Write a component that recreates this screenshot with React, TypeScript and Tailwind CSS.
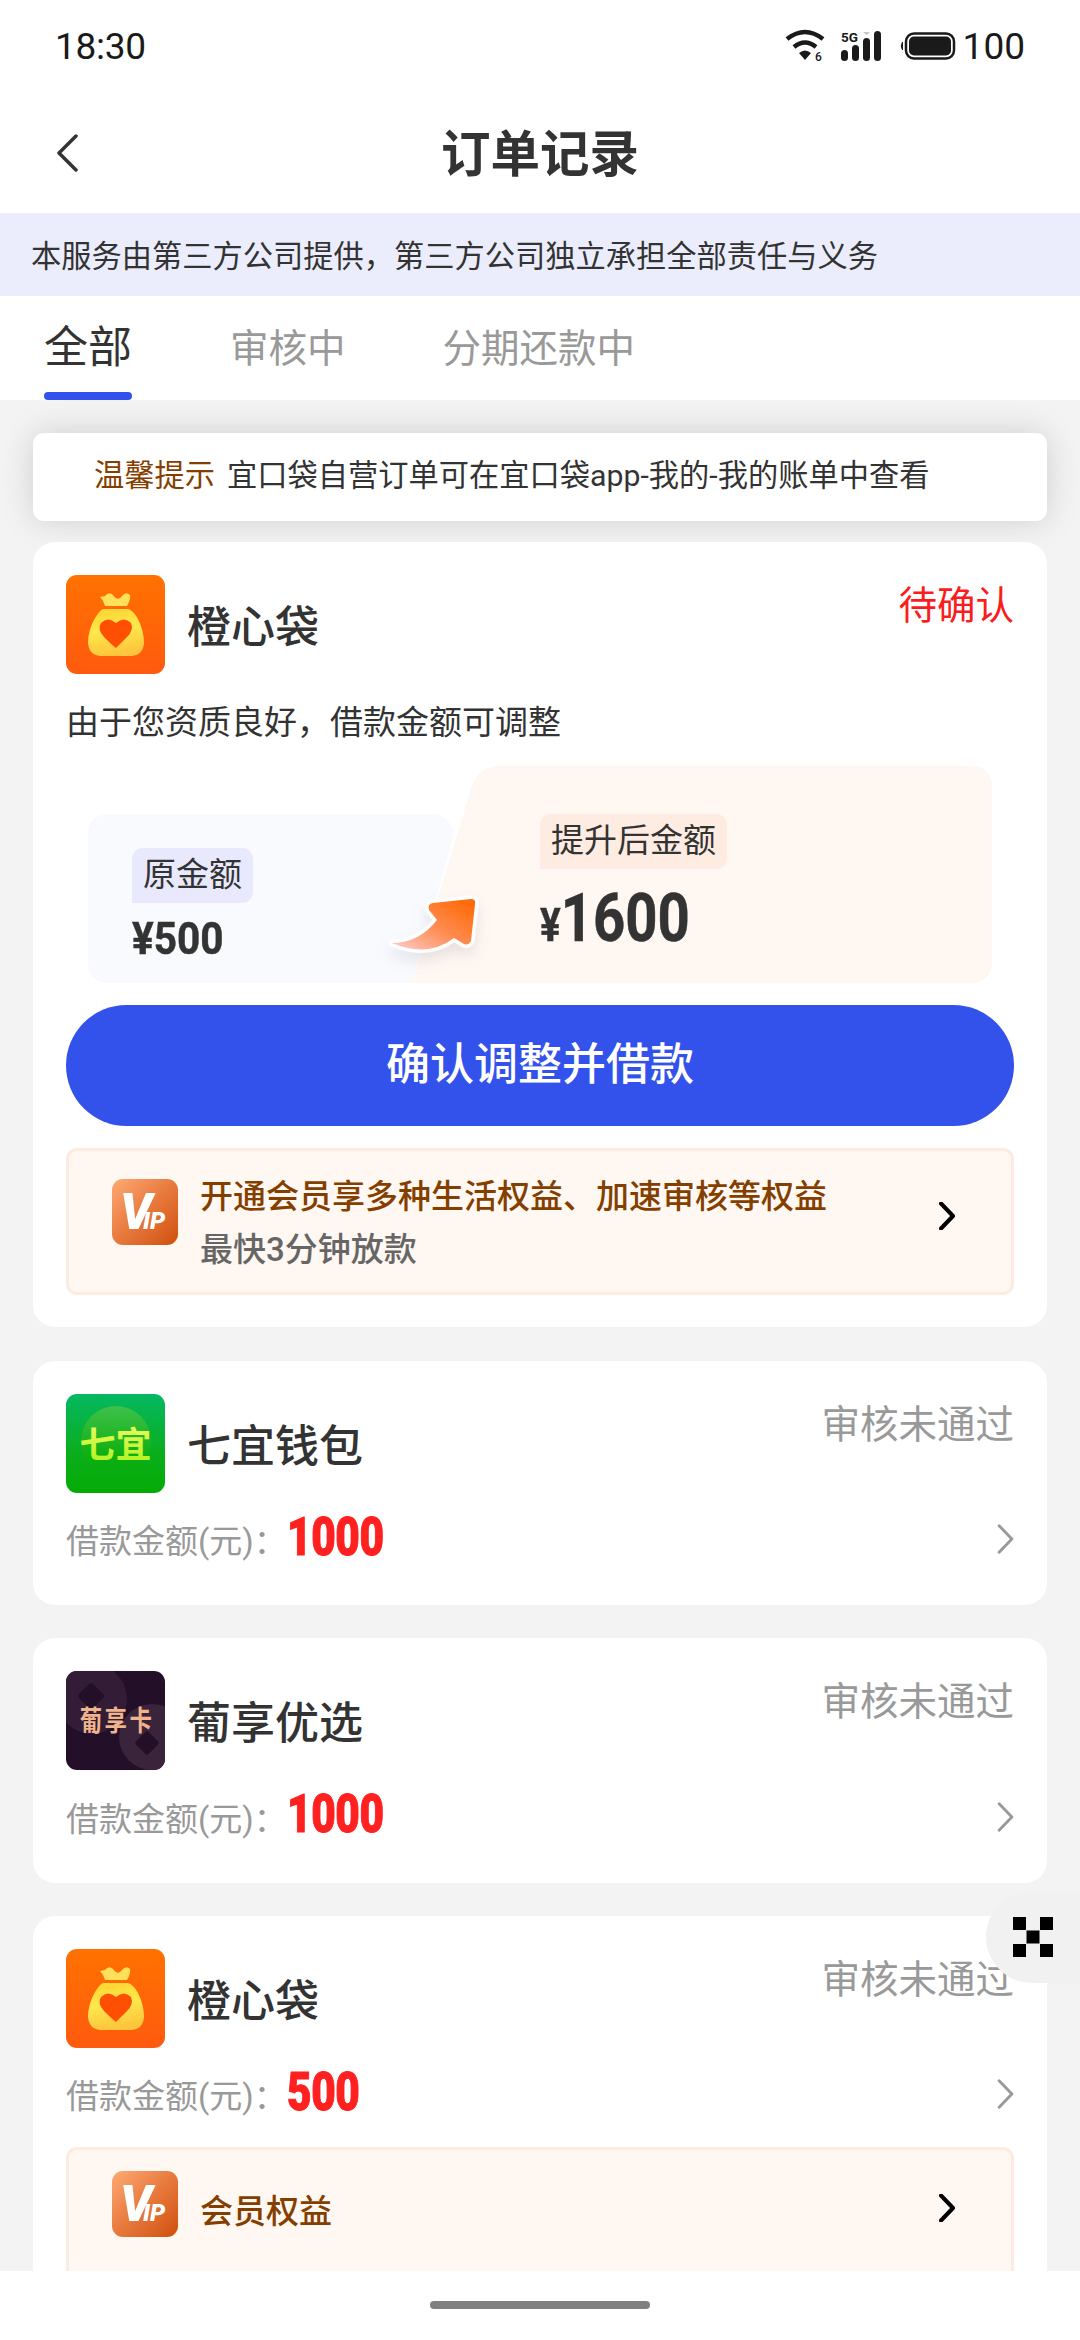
import React from "react";

type Order = {
  name: string;
  logo: React.ReactNode;
  amount: string;
  member?: boolean;
};

const BagLogo: React.FC = () => (
  <svg viewBox="0 0 99 99" className="size-[99px] rounded-[11px]">
    <defs>
      <linearGradient id="bagBg" x1="0" y1="0" x2="0" y2="1">
        <stop offset="0" stopColor="#ff7200" />
        <stop offset="1" stopColor="#ff5a0e" />
      </linearGradient>
      <linearGradient id="bagFill" x1="0" y1="0" x2="0.2" y2="1">
        <stop offset="0" stopColor="#fdd22f" />
        <stop offset="0.5" stopColor="#ffe84d" />
        <stop offset="1" stopColor="#fdc63c" />
      </linearGradient>
    </defs>
    <rect width="99" height="99" fill="url(#bagBg)" />
    <path
      d="M34 22 L39 21 Q43 16 47 20 Q52 27 56 21 Q60 16 64 20 Q65 24 61 31 H39 Q38 26 34 22 Z"
      fill="#fee05a"
    />
    <path
      d="M37 34 H62 Q67 35 72 44 Q78 56 78 68 Q77 80 66 81 H34 Q23 80 22 68 Q22 55 29 43 Q34 35 37 34 Z"
      fill="url(#bagFill)"
    />
    <path
      d="M50 73 Q47 71 38 62 Q31 54 35 48 Q42 41 50 48 Q58 41 65 48 Q68 55 61 62 Q52 71 50 73 Z"
      fill="#ff4f02"
    />
  </svg>
);

const QiyiLogo: React.FC = () => (
  <svg viewBox="0 0 99 99" className="size-[99px] rounded-[11px]">
    <defs>
      <linearGradient id="qiyiBg" x1="0" y1="0" x2="0" y2="1">
        <stop offset="0" stopColor="#05b862" />
        <stop offset="0.6" stopColor="#0aae1c" />
        <stop offset="1" stopColor="#05ab04" />
      </linearGradient>
      <linearGradient id="qiyiCircle" x1="0" y1="0" x2="0" y2="1">
        <stop offset="0" stopColor="#3fc04c" />
        <stop offset="0.7" stopColor="#0fb010" />
        <stop offset="1" stopColor="#05ab04" stopOpacity="0" />
      </linearGradient>
      <linearGradient id="qiyiText" x1="0" y1="0" x2="0" y2="1">
        <stop offset="0" stopColor="#fbfb6a" />
        <stop offset="1" stopColor="#a8f21c" />
      </linearGradient>
    </defs>
    <rect width="99" height="99" fill="url(#qiyiBg)" />
    <circle cx="50" cy="47" r="35" fill="url(#qiyiCircle)" />
    <text
      x="49.5"
      y="64"
      textAnchor="middle"
      fontSize="36"
      fontWeight="700"
      fontFamily="'Noto Sans CJK SC', sans-serif"
      fill="url(#qiyiText)"
    >
      七宜
    </text>
  </svg>
);

const PuxiangLogo: React.FC = () => (
  <svg viewBox="0 0 99 99" className="size-[99px] rounded-[11px]">
    <rect width="99" height="99" fill="#240f29" />
    <circle cx="26" cy="28" r="35" fill="#321c36" />
    <circle cx="86" cy="66" r="33" fill="#3a243c" />
    <rect x="15" y="15" width="20" height="20" rx="3" transform="rotate(45 25 25)" fill="#240f29" />
    <rect x="72" y="63" width="18" height="18" rx="3" transform="rotate(45 81 72)" fill="#240f29" />
    <text
      transform="translate(51 60) scale(0.8 1)"
      textAnchor="middle"
      fontSize="28"
      fontWeight="700"
      letterSpacing="3"
      fontFamily="'Noto Sans CJK SC', sans-serif"
      fill="#efb48c"
    >
      葡享卡
    </text>
  </svg>
);

const VipIcon: React.FC = () => (
  <div className="flex size-[66px] shrink-0 items-end rounded-[11px] bg-linear-to-br from-[#fdaa74] via-[#e8793d] to-[#cf5000] pb-[15px] pl-[8px] font-black italic text-white">
    <span className="text-[50px] leading-[35px] tracking-[-9px]">V</span>
    <span className="text-[24px] leading-[17px]">IP</span>
  </div>
);

const Chevron: React.FC<{ className: string; width: number }> = ({ className, width }) => (
  <svg viewBox="0 0 16 28" className={className} fill="none" stroke="currentColor" strokeWidth={width}>
    <path d="M2 1.5 L14 14 L2 26.5" strokeLinecap="round" strokeLinejoin="round" />
  </svg>
);

const StatusBar: React.FC = () => (
  <div className="flex h-[92px] items-center justify-between pl-[55px] pr-[55px] pt-[2px] text-[#1a1a1a]">
    <span className="text-[37px] leading-[40px] tracking-[-0.3px]">18:30</span>
    <div className="flex items-center">
      <svg viewBox="0 0 100 34" className="-mt-[4px] mr-[15px] h-[34px] w-[100px]">
        <g fill="none" stroke="#1a1a1a" strokeWidth="4.5">
          <path d="M2 11 Q20 -3 38 11" />
          <path d="M9 19 Q20 10 31 19" />
        </g>
        <path d="M14 25 Q20 20 26 25 L20 32 Z" fill="#1a1a1a" />
        <text x="30" y="32.5" fontSize="12" fontWeight="500" fill="#1a1a1a">6</text>
        <text x="56" y="14" fontSize="13.5" fontWeight="700" fill="#1a1a1a">5G</text>
        <g fill="#1a1a1a">
          <rect x="56" y="22" width="7" height="11" rx="3.5" />
          <rect x="67" y="17" width="7" height="16" rx="3.5" />
          <rect x="78" y="10" width="7" height="23" rx="3.5" />
          <rect x="89" y="3" width="7" height="30" rx="3.5" />
        </g>
        <path d="M78 4 H85 L81.5 7 Z" fill="#c4c4c4" />
      </svg>
      <svg viewBox="0 0 56 28" className="-mt-[2px] mr-[7px] h-[28px] w-[56px]">
        <path d="M2.5 10 Q0 14 2.5 18 Z" fill="#1a1a1a" stroke="#1a1a1a" />
        <rect x="6" y="1.5" width="48" height="25" rx="8" fill="none" stroke="#1a1a1a" strokeWidth="2.5" />
        <rect x="9" y="4.5" width="42" height="19" rx="5" fill="#1a1a1a" />
      </svg>
      <span className="text-[37px] leading-[40px]">100</span>
    </div>
  </div>
);

const Header: React.FC = () => (
  <div className="grid h-[121px] grid-cols-3 items-center">
    <svg viewBox="0 0 22 38" className="ml-[56px] h-[38px] w-[22px]" fill="none" stroke="#333" strokeWidth="3.5">
      <path d="M20 2 L3 19 L20 36" strokeLinecap="round" strokeLinejoin="round" />
    </svg>
    <h1 className="pt-[4px] text-center text-[49.5px] font-bold leading-[60px] text-[#333]">订单记录</h1>
  </div>
);

const Tabs: React.FC = () => (
  <div className="flex h-[104px] shrink-0 bg-white pl-[44px] text-[38.5px] leading-[106px] text-[#999]">
    <div className="flex w-[88px] flex-col justify-between text-[44px] leading-[104px] text-[#333]">
      <span className="h-[96px]">全部</span>
      <span className="h-[8px] rounded-[4px] bg-[#3352eb]" />
    </div>
    <span className="ml-[98px]">审核中</span>
    <span className="ml-[97px]">分期还款中</span>
  </div>
);

const MemberBox: React.FC<{ title: string; subtitle?: string }> = ({ title, subtitle }) => (
  <div
    className={
      "flex h-[147px] shrink-0 rounded-[11px] border-[3px] border-[#fdebdf] bg-[#fff7f1] pl-[43px] pr-[56px] " +
      (subtitle ? "pt-[28px]" : "pt-[21px]")
    }
  >
    <VipIcon />
    <div className="ml-[22px] flex flex-1 flex-col font-medium">
      <span className={"text-[33px] leading-[40px] text-[#843f00] " + (subtitle ? "-mt-[2px]" : "mt-[21px]")}>
        {title}
      </span>
      {subtitle && <span className="mt-[13px] text-[33px] leading-[40px] text-[#666]">{subtitle}</span>}
    </div>
    <Chevron className="mt-[23px] h-[28px] w-[16px] text-black" width={4} />
  </div>
);

const AmountPanel: React.FC = () => (
  <div className="relative ml-[22px] mr-[22px] mt-[23px] h-[217px] text-[#333]">
    <svg viewBox="0 0 904 217" className="absolute inset-0 h-full w-full">
      <defs>
        <linearGradient id="arrowFill" x1="0" y1="1" x2="1" y2="0">
          <stop offset="0.05" stopColor="#ffc6c0" />
          <stop offset="0.5" stopColor="#ff8a4e" />
          <stop offset="0.9" stopColor="#ff6c0a" />
        </linearGradient>
        <filter id="arrowShadow" x="-30%" y="-30%" width="160%" height="180%">
          <feDropShadow dx="0" dy="8" stdDeviation="7" floodColor="#8c8c9c" floodOpacity="0.2" />
        </filter>
      </defs>
      <path d="M22 48 H342 Q362 48 366 68 L324 217 H22 Q0 217 0 195 V70 Q0 48 22 48 Z" fill="#f9fafe" />
      <path
        d="M324 217 L384 20 Q391 0 412 0 H882 Q904 0 904 22 V195 Q904 217 882 217 Z"
        fill="#fff7f1"
      />
      <g transform="translate(292 104)" filter="url(#arrowShadow)">
        <path
          d="M12 73 Q39 73 57 50 L49 40 Q47 34 53 33 L91 29 Q96 29 95 34 L91 71 Q88 76 84 74 L74 68 Q48 88 12 73 Z"
          fill="url(#arrowFill)"
          stroke="#fff"
          strokeWidth="7"
          strokeLinejoin="round"
          paintOrder="stroke"
        />
      </g>
    </svg>
    <div className="relative flex">
      <div className="flex w-[452px] flex-col items-start pl-[44px] pt-[82px]">
        <span className="h-[55px] rounded-[11px] rounded-bl-none bg-[#e8e9fc] px-[11px] text-[33px] leading-[54px]">
          原金额
        </span>
        <span className="mt-[10px] origin-left scale-x-[0.9] text-[45px] font-bold leading-[52px] [-webkit-text-stroke:0.5px_#333]">
          ¥500
        </span>
      </div>
      <div className="flex flex-col items-start pt-[48px]">
        <span className="h-[55px] rounded-[11px] rounded-bl-none bg-[#feece2] px-[11px] text-[33px] leading-[54px]">
          提升后金额
        </span>
        <span className="mt-[13px] origin-left scale-x-[0.84] text-[67px] font-bold leading-[72px] [-webkit-text-stroke:0.5px_#333]">
          <span className="text-[46px]">¥</span>1600
        </span>
      </div>
    </div>
  </div>
);

const CardHead: React.FC<{ name: string; logo: React.ReactNode; status: string; alert?: boolean }> = ({
  name,
  logo,
  status,
  alert,
}) => (
  <div className="flex h-[99px] shrink-0">
    {logo}
    <span className="ml-[22px] flex-1 text-[44px] font-medium leading-[106px] text-[#333]">{name}</span>
    <span className={"text-[38.5px] leading-[62px] " + (alert ? "text-[#f91d1d]" : "text-[#999]")}>
      {status}
    </span>
  </div>
);

const OrderCard: React.FC<Order> = ({ name, logo, amount, member }) => (
  <div
    className={
      "flex shrink-0 flex-col rounded-[22px] bg-white px-[33px] pt-[33px] " + (member ? "h-[420px]" : "h-[244.5px]")
    }
  >
    <CardHead name={name} logo={logo} status="审核未通过" />
    <div className="mt-[16px] flex h-[56px] shrink-0 items-center">
      <span className="mt-[11px] text-[33px] leading-[40px] text-[#999]">借款金额(元)：</span>
      <span className="flex-1 origin-left scale-x-[0.8] text-[53px] font-black leading-[56px] tracking-[-0.5px] text-[#ff2020] [-webkit-text-stroke:1px_#ff2020]">
        {amount}
      </span>
      <Chevron className="mt-[5px] h-[30px] w-[17px] text-[#999]" width={2.7} />
    </div>
    {member && (
      <div className="mt-[27px]">
        <MemberBox title="会员权益" />
      </div>
    )}
  </div>
);

const orders: Order[] = [
  { name: "七宜钱包", logo: <QiyiLogo />, amount: "1000" },
  { name: "葡享优选", logo: <PuxiangLogo />, amount: "1000" },
  { name: "橙心袋", logo: <BagLogo />, amount: "500", member: true },
];

const App: React.FC = () => {
  return (
    <div
      lang="zh-CN"
      className="relative flex h-[2340px] w-[1080px] flex-col overflow-hidden bg-white font-[Roboto,'Noto_Sans_CJK_SC',sans-serif]"
    >
      <StatusBar />
      <Header />
      <div className="h-[83px] shrink-0 bg-[#ebedfc] pl-[31px] text-[30.25px] leading-[87px] text-[#333]">
        本服务由第三方公司提供，第三方公司独立承担全部责任与义务
      </div>
      <Tabs />
      <div className="flex h-[1871px] shrink-0 flex-col overflow-hidden bg-[#f3f3f3] px-[33px] pt-[33px]">
        <div className="h-[88px] shrink-0 rounded-[11px] bg-white pl-[61px] text-[30.25px] leading-[86px] text-[#333] shadow-[0_0_33px_rgba(0,0,0,0.15)]">
          <span className="mr-[12px] text-[#843f00]">温馨提示</span>
          宜口袋自营订单可在宜口袋app-我的-我的账单中查看
        </div>
        <div className="relative mt-[21px] flex h-[785px] shrink-0 flex-col rounded-[22px] bg-white px-[33px] pt-[33px]">
          <CardHead name="橙心袋" logo={<BagLogo />} status="待确认" alert />
          <p className="mt-[29px] text-[33px] leading-[40px] text-[#333]">由于您资质良好，借款金额可调整</p>
          <AmountPanel />
          <button className="mb-[22px] mt-[22px] h-[121px] shrink-0 rounded-full bg-[#3352eb] text-[44px] font-medium leading-[121px] text-white">
            确认调整并借款
          </button>
          <MemberBox title="开通会员享多种生活权益、加速审核等权益" subtitle="最快3分钟放款" />
        </div>
        <div className="mt-[33.5px] flex flex-col gap-[33px]">
          {orders.map((order) => (
            <OrderCard key={order.name} {...order} />
          ))}
        </div>
      </div>
      <div className="flex flex-1 justify-center pt-[30px]">
        <div className="h-[8px] w-[220px] rounded-full bg-[#808080]" />
      </div>

      {/* floating shortcut pinned to the right edge */}
      <div className="absolute right-0 top-[1891px] flex h-[92px] w-[94px] items-center rounded-l-full bg-[#f1f1f1] pl-[27px]">
        <svg viewBox="0 0 40 40" className="size-[40px]">
          <path d="M0 0h13v13H0zM27 0h13v13H27zM13.5 13.5h13v13h-13zM0 27h13v13H0zM27 27h13v13H27z" fill="#000" />
        </svg>
      </div>
    </div>
  );
};

export default App;
